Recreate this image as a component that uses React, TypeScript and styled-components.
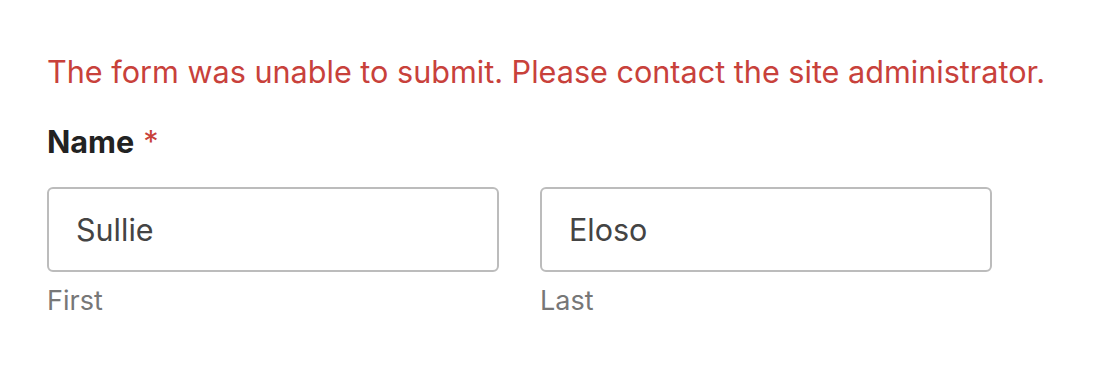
import React from 'react';
import styled, { createGlobalStyle } from 'styled-components';

const GlobalStyle = createGlobalStyle`
  html, body {
    margin: 0;
    background: #fff;
    font-family: Inter, "Noto Sans", sans-serif;
  }
`;

const Page = styled.div`
  padding: 50px 47px 0;
`;

const ErrorMessage = styled.p`
  margin: 0 0 28px;
  color: #c8413b;
  font-size: 30.6px;
  line-height: 44px;
`;

const Label = styled.div`
  font-size: 30.6px;
  font-weight: 700;
  color: #222;
  line-height: 40px;
  margin-bottom: 25px;
`;

const Required = styled.span`
  color: #c8413b;
  font-weight: 400;
  margin-left: 9px;
`;

const Row = styled.div`
  display: flex;
  gap: 41px;
`;

const Field = styled.div`
  width: 452px;
  display: flex;
  flex-direction: column;
`;

const Input = styled.input`
  box-sizing: border-box;
  width: 100%;
  height: 85px;
  border: 2px solid #bcbcbc;
  border-radius: 6px;
  padding: 0 27px;
  font-family: inherit;
  font-size: 30.5px;
  color: #444;
  outline: none;
`;

const Sublabel = styled.span`
  margin-top: 11px;
  font-size: 27px;
  color: #777;
  line-height: 36px;
`;

export default function App() {
  return (
    <Page>
      <GlobalStyle />
      <ErrorMessage>The form was unable to submit. Please contact the site administrator.</ErrorMessage>
      <Label>
        Name<Required>*</Required>
      </Label>
      <Row>
        <Field>
          <Input defaultValue="Sullie" />
          <Sublabel>First</Sublabel>
        </Field>
        <Field>
          <Input defaultValue="Eloso" />
          <Sublabel>Last</Sublabel>
        </Field>
      </Row>
    </Page>
  );
}
